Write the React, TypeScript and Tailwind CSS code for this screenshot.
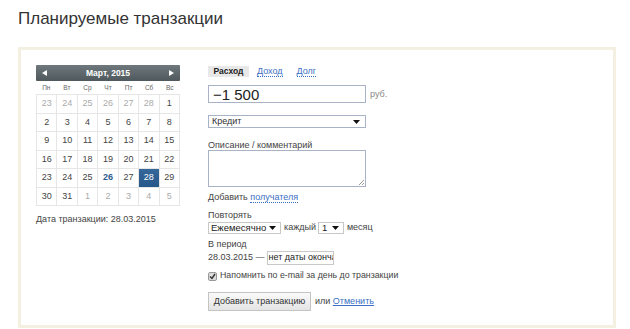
import React from 'react';

const weekDays = ['Пн', 'Вт', 'Ср', 'Чт', 'Пт', 'Сб', 'Вс'];

// [day, isCurrentMonth]
const days: [number, boolean][] = [
  [23, false], [24, false], [25, false], [26, false], [27, false], [28, false], [1, true],
  [2, true], [3, true], [4, true], [5, true], [6, true], [7, true], [8, true],
  [9, true], [10, true], [11, true], [12, true], [13, true], [14, true], [15, true],
  [16, true], [17, true], [18, true], [19, true], [20, true], [21, true], [22, true],
  [23, true], [24, true], [25, true], [26, true], [27, true], [28, true], [29, true],
  [30, true], [31, true], [1, false], [2, false], [3, false], [4, false], [5, false],
];

function Arrow({ className = '' }: { className?: string }) {
  return (
    <svg className={className} width="7" height="4" viewBox="0 0 7 4">
      <polygon points="0,0 7,0 3.5,4" fill="#111" />
    </svg>
  );
}

function Calendar() {
  return (
    <div className="w-[144px] shrink-0">
      <div className="flex h-[16px] items-center justify-between rounded-[1px] bg-gradient-to-b from-[#6f797d] to-[#4f595d] px-[6px] text-white">
        <svg width="5" height="6" viewBox="0 0 5 6"><polygon points="5,0 5,6 0,3" fill="#fff" /></svg>
        <span className="text-[8.5px] font-bold leading-none">Март, 2015</span>
        <svg width="5" height="6" viewBox="0 0 5 6"><polygon points="0,0 0,6 5,3" fill="#fff" /></svg>
      </div>
      <div className="grid h-[13px] grid-cols-7 items-center text-center text-[6.5px] text-[#666]">
        {weekDays.map(d => <span key={d}>{d}</span>)}
      </div>
      <div className="grid grid-cols-7 border-l border-t border-[#e6e6e6]">
        {days.map(([d, cur], i) => {
          const selected = cur && d === 28;
          const today = cur && d === 26;
          return (
            <div
              key={i}
              className={
                'flex h-[18.5px] items-center justify-center border-b border-r border-[#e6e6e6] text-[9px] ' +
                (selected
                  ? 'bg-gradient-to-b from-[#35679a] to-[#28578a] text-white'
                  : today
                  ? 'font-bold text-[#2d5d8e]'
                  : cur
                  ? 'text-[#444]'
                  : 'text-[#aaa]')
              }
            >
              {d}
            </div>
          );
        })}
      </div>
      <div className="mt-[7px] whitespace-nowrap text-[9px] leading-[12px] text-[#444]">Дата транзакции: 28.03.2015</div>
    </div>
  );
}

function TransactionForm() {
  return (
    <div className="w-[360px] whitespace-nowrap text-[9px] text-[#444]">
      <div className="flex h-[13px] items-center">
        <span className="h-[11px] w-[41px] bg-[#e8e8e8] text-center text-[8.5px] font-bold leading-[11px] text-[#222]">Расход</span>
        <span className="ml-[8px] border-b border-dotted border-[#3a6fc4] leading-[10px] text-[#3a6fc4]">Доход</span>
        <span className="ml-[14px] border-b border-dotted border-[#3a6fc4] leading-[10px] text-[#3a6fc4]">Долг</span>
      </div>

      <div className="mt-[7px] flex items-center gap-[4px]">
        <div className="flex h-[18px] w-[158px] items-center border border-[#a8b3c8] px-[4px] text-[15px] leading-none text-[#222]">
          −1 500
        </div>
        <span className="mt-[2px] text-[#888]">руб.</span>
      </div>

      <div className="mt-[12px] flex h-[13px] w-[158px] items-center justify-between border border-[#a8b3c8] pl-[3px] pr-[5px] text-[#333]">
        <span className="leading-none">Кредит</span>
        <Arrow />
      </div>

      <div className="mt-[12px] leading-[10px]">Описание / комментарий</div>
      <div className="relative h-[37px] w-[158px] border border-[#a8b3c8]">
        <svg className="absolute bottom-[1px] right-[1px]" width="6" height="6" viewBox="0 0 6 6">
          <path d="M1 6 L6 1 M4 6 L6 4" stroke="#999" strokeWidth="1" />
        </svg>
      </div>

      <div className="mt-[4px] leading-[12px]">
        Добавить{' '}
        <span className="border-b border-dotted border-[#3a6fc4] text-[#3a6fc4]">получателя</span>
      </div>

      <div className="mt-[6px] leading-[12px]">Повторять</div>
      <div className="mt-[1px] flex h-[12px] items-center">
        <div className="flex h-[12px] w-[73px] items-center justify-between border border-[#c8c8c8] pl-[2px] pr-[4px] text-[9.5px] text-[#222]">
          <span className="leading-none">Ежемесячно</span>
          <Arrow />
        </div>
        <span className="ml-[3px]">каждый</span>
        <div className="ml-[2px] flex h-[12px] w-[26px] items-center justify-between border border-[#c8c8c8] pl-[3px] pr-[4px] text-[9.5px] text-[#222]">
          <span className="leading-none">1</span>
          <Arrow />
        </div>
        <span className="ml-[3px]">месяц</span>
      </div>

      <div className="mt-[4px] leading-[12px]">В период</div>
      <div className="mt-[1px] flex h-[14px] items-center">
        <span>28.03.2015 —</span>
        <div className="ml-[2px] flex h-[14px] w-[67px] items-center overflow-hidden border border-[#c8c8c8] pl-[1px] text-[#222]">
          нет даты окончания
        </div>
      </div>

      <div className="mt-[5px] flex h-[12px] items-center gap-[3px]">
        <span className="flex h-[9px] w-[9px] items-center justify-center rounded-[2px] border border-[#999] bg-[#dcdcdc]">
          <svg width="7" height="7" viewBox="0 0 7 7">
            <path d="M1 3.5 L3 5.5 L6 1" stroke="#333" strokeWidth="1.4" fill="none" />
          </svg>
        </span>
        <span className="text-[8.8px]">Напомнить по e-mail за день до транзакции</span>
      </div>

      <div className="mt-[10px] flex items-center">
        <div className="flex h-[19px] w-[103px] items-center justify-center border border-[#c4c4c4] bg-gradient-to-b from-[#fafafa] to-[#e4e4e4] text-[9px] text-[#333]">
          Добавить транзакцию
        </div>
        <span className="ml-[4px]">
          или <span className="text-[#3a6fc4] underline">Отменить</span>
        </span>
      </div>
    </div>
  );
}

export default function App() {
  return (
    <div className="h-[329px] w-[630px] bg-white px-[18px] pt-[8px] font-['Liberation_Sans',Arial,sans-serif]">
      <h1 className="text-[17px] leading-[22px] text-[#333]">Планируемые транзакции</h1>
      <div className="mt-[17px] flex h-[281px] w-[598px] gap-[28px] border-[3px] border-[#f3f0e2] pl-[15px] pt-[15px]">
        <Calendar />
        <TransactionForm />
      </div>
    </div>
  );
}
